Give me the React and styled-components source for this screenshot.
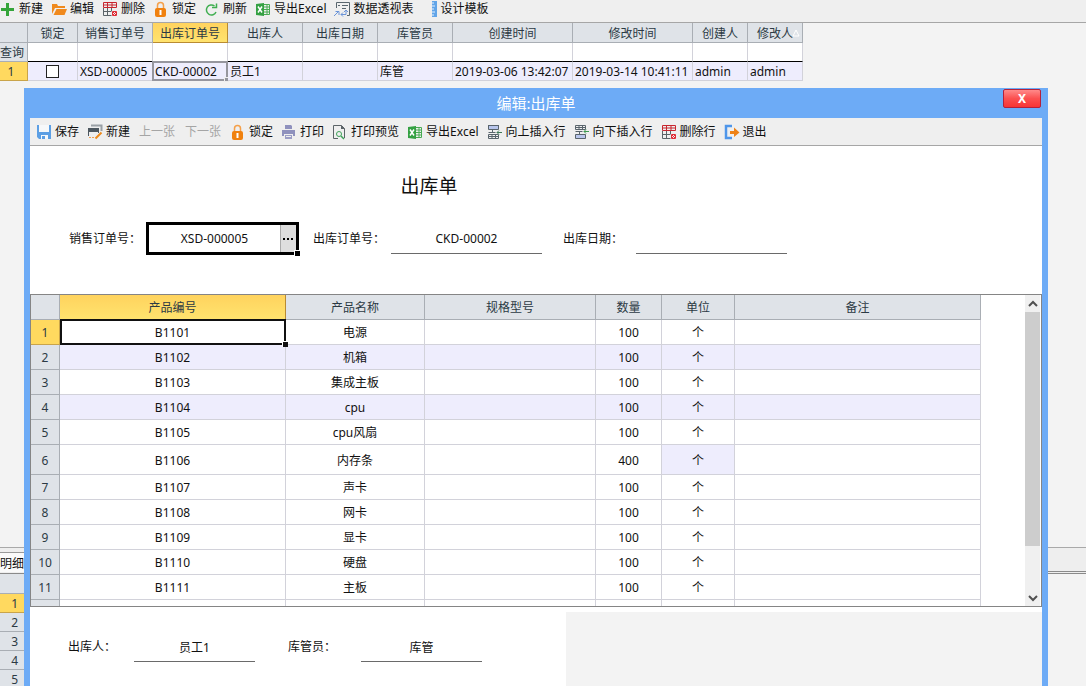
import React from "react";
import styled, { createGlobalStyle, css } from "styled-components";

const GlobalStyle = createGlobalStyle`
  *, *::before, *::after { box-sizing: border-box; }
  body {
    margin: 0;
    background: #f3f3f3;
    color: #111;
    font: 12px/16px "Noto Sans", "Noto Sans CJK SC", sans-serif;
  }
  button, input { font: inherit; color: inherit; }
`;

const HEAD = "#dfe3e8";
const LINE = "#a9aeb4";
const STRIPE = "#eeedfd";
const GOLD = "linear-gradient(#ffd35e, #ffe36e)";

/* ---------- icons ---------- */

const Icon = styled.svg.attrs({ viewBox: "0 0 16 16", "aria-hidden": true })`
  width: 16px;
  height: 16px;
  flex: none;
`;

const PlusIcon = () => (
  <Icon><path d="M6 2h3v5h5v3H9v5H6v-5H1V7h5z" fill="#35a53a" /></Icon>
);
const FolderIcon = () => (
  <Icon>
    <path d="M1 13V3h5l1 2h7v2H4z" fill="#f08a1d" />
    <path d="M5.500 8H16l-2.500 6H2.500z" fill="#f08a1d" />
  </Icon>
);
const DeleteRowIcon = () => (
  <Icon fill="none">
    <path d="M1.500 7v7.500h8M1.500 10.500h8M5.500 7v7.500M9.500 7v3" stroke="#5b6468" />
    <path d="M1.500 1.500h13v5h-13zM1.500 4h13M5.500 1.500v5M10 1.500v5" stroke="#c8262f" />
    <path d="M10.500 10.500h4v4h-4zM11 11l3 3M14 11l-3 3" stroke="#e02b35" />
  </Icon>
);
const LockIcon = () => (
  <Icon>
    <path d="M4.500 8V4.500a3 3 0 0 1 6 0V8" fill="none" stroke="#f5a04a" strokeWidth="1.500" />
    <rect x="2" y="7" width="11" height="9" rx="2" fill="#f0810f" />
    <path d="M6.500 9h2v5h-2z" fill="#fff" />
  </Icon>
);
const RefreshIcon = () => (
  <Icon fill="none" stroke="#3fae50" strokeWidth="1.500">
    <path d="M12 11A5 5 0 1 1 10.500 5" />
    <path d="M8 6.500h4.500V2.500" />
  </Icon>
);
const ExcelIcon = () => (
  <Icon>
    <path d="M1 3l8-1v13l-8-1z" fill="#35a143" />
    <path d="M3 5.500l4 6M7 5.500l-4 6" stroke="#fff" strokeWidth="1.500" />
    <path d="M9 3.500h5.500v10H9M12 3.500v10M9 6h6M9 8.500h6M9 11h6" fill="none" stroke="#48ab52" />
  </Icon>
);
const PivotIcon = () => (
  <Icon fill="none">
    <path d="M2.500 7V1.500h13v13H13M4 4.500h2M8 4.500h6M8 7.500h4" stroke="#59666e" />
    <path d="M0 15l5-5M1.500 10.500h3.500v3.500M7 13.500h5V9M10 11l2-2 2 2M9 11.500l-2 2 2 2" stroke="#6b94d8" />
  </Icon>
);
const RulerIcon = () => (
  <Icon>
    <path d="M10 0h5v16h-5z" fill="#62a5e8" />
    <path d="M10 2h2M10 5h3M10 8h2M10 11h3M10 14h2" stroke="#e4f1ff" />
  </Icon>
);
const SaveIcon = () => (
  <Icon>
    <path d="M1 1h14v14H3l-2-2z" fill="#5c9fe4" />
    <path d="M3 1h10v7H3zM5 11h7v4H5z" fill="#f6f8fa" />
    <path d="M6 12h3v3H6z" fill="#5c9fe4" />
  </Icon>
);
const NewFormIcon = () => (
  <Icon fill="none">
    <path d="M4 1.500h10.500V7" stroke="#9aa0a5" strokeWidth="2" />
    <path d="M1.500 5v7M11.500 5v4" stroke="#4e5860" />
    <path d="M1 4h11v4H1z" fill="#4e5860" />
    <path d="M2 13.500h6" stroke="#f0a050" strokeDasharray="2 1" />
    <path d="M8.500 14.500l6-6" stroke="#ee8a1a" strokeWidth="2" />
  </Icon>
);
const PrintIcon = () => (
  <Icon>
    <path d="M4 1h6l1 1v3H4z" fill="#8f91bd" />
    <path d="M1 6h13v6h-2v-2H3v2H1z" fill="#8f91bd" />
    <path d="M4 11h7v4H4z" fill="#9c9ec6" />
    <path d="M4 5.500h7M5 12.500h5" stroke="#eee" />
  </Icon>
);
const PreviewIcon = () => (
  <Icon fill="none">
    <path d="M6 14.500H1.500v-13h8l3 3V14" stroke="#5c6468" />
    <path d="M9 1v4h4" fill="#5c6468" />
    <circle cx="7" cy="10" r="2.500" stroke="#3fa25a" />
    <path d="M9 12l3 3" stroke="#3fa25a" strokeWidth="1.500" />
  </Icon>
);
const InsertAboveIcon = () => (
  <Icon fill="none" stroke="#59646c">
    <path d="M1.500 1.500h10v4h-10z" fill="#b9c6ec" />
    <path d="M1 1.500h11M1.500 8.500h7M5.500 6v2M1.500 10.500h10v4h-10zM5 10.500v4M8.500 10.500v4M2 12.500h9" />
    <path d="M15 8.500h-5M12 6.500l-2 2 2 2" stroke="#3f7757" />
  </Icon>
);
const InsertBelowIcon = () => (
  <Icon fill="none" stroke="#59646c">
    <path d="M1.500 1.500h10v4h-10zM5 1.500v4M8.500 1.500v4M2 3.500h9M1.500 7.500h7M5.500 8v2" />
    <path d="M1.500 10.500h10v4h-10z" fill="#b9c6ec" />
    <path d="M15 7.500h-5M12 5.500l-2 2 2 2" stroke="#3f9a50" />
  </Icon>
);
const ExitIcon = () => (
  <Icon>
    <path d="M8 2H2v12h6" fill="none" stroke="#4f96ea" strokeWidth="2.500" />
    <path d="M6 7h4V3.500L15.500 8.500 10 13V10H6z" fill="#ee8216" />
  </Icon>
);
const ChevronIcon = ({ down }) => (
  <Icon>
    <path d={down ? "M4 6l4 4 4-4" : "M4 10l4-4 4 4"} fill="none" stroke="#505050" strokeWidth="2" />
  </Icon>
);

/* ---------- toolbars ---------- */

const Toolbar = styled.div`
  display: flex;
  align-items: center;
  gap: 8px;
  flex: none;
  background: #efefef;
  border-bottom: 1px solid #a6a6a6;
  height: ${(p) => (p.$dialog ? 28 : 23)}px;
  padding: ${(p) => (p.$dialog ? "1px 6px 0" : "0 0 4px")};
`;

const ToolButton = styled.button`
  display: flex;
  align-items: center;
  gap: 3px;
  flex: none;
  padding: 0;
  border: 0;
  background: none;
  white-space: nowrap;
  &:disabled { color: #a5a5a5; padding: 0 1px; }
`;

const Tools = ({ items }) =>
  items.map(([label, Glyph]) => (
    <ToolButton key={label} type="button" disabled={!Glyph}>
      {Glyph && <Glyph />}
      {label}
    </ToolButton>
  ));

const MAIN_TOOLS = [
  ["新建", PlusIcon], ["编辑", FolderIcon], ["删除", DeleteRowIcon], ["锁定", LockIcon],
  ["刷新", RefreshIcon], ["导出Excel", ExcelIcon], ["数据透视表", PivotIcon], ["设计模板", RulerIcon],
];
const DIALOG_TOOLS = [
  ["保存", SaveIcon], ["新建", NewFormIcon], ["上一张"], ["下一张"], ["锁定", LockIcon],
  ["打印", PrintIcon], ["打印预览", PreviewIcon], ["导出Excel", ExcelIcon],
  ["向上插入行", InsertAboveIcon], ["向下插入行", InsertBelowIcon],
  ["删除行", DeleteRowIcon], ["退出", ExitIcon],
];

/* ---------- main window ---------- */

const Page = styled.div`
  position: relative;
  display: flex;
  flex-direction: column;
  height: 100vh;
  overflow: hidden;
`;

const ListPane = styled.main`
  flex: 1;
  min-height: 0;
  overflow: hidden;
`;

const Grid = styled.table`
  table-layout: fixed;
  border-collapse: separate;
  border-spacing: 0;
  width: ${(p) => p.$width}px;
`;

const gridCell = css`
  padding: 2px 2px 0;
  border-right: 1px solid #d2d2da;
  border-bottom: 1px solid #d2d2da;
  font-weight: normal;
  white-space: nowrap;
`;

const HeadCell = styled.th`
  ${gridCell}
  height: 20px;
  color: #2c3a44;
  text-align: center;
  background: ${(p) => (p.$active ? GOLD : HEAD)};
  border-color: ${(p) => (p.$active ? "#b98b32" : LINE)};
`;

const RowHead = styled.th`
  ${gridCell}
  height: ${(p) => p.$h || 19}px;
  padding: 2px ${(p) => p.$pad || 0}px 0 0;
  color: #2c3a44;
  text-align: ${(p) => p.$align || "center"};
  background: ${(p) => (p.$active ? "#ffd95f" : HEAD)};
  border-color: ${(p) => (p.$active ? "#c9a44a" : LINE)};
`;

const ListCell = styled.td`
  ${gridCell}
  position: relative;
  overflow: ${(p) => (p.$active ? "visible" : "hidden")};
  background: ${(p) => (p.$query ? "#fff" : STRIPE)};
  ${(p) => p.$query && "border-bottom-color: #000;"}
  ${(p) => p.$active && css`
    &::before {
      content: "";
      position: absolute;
      inset: -1px;
      border: 2px solid #96969e;
    }
    &::after {
      content: "";
      position: absolute;
      right: -2px;
      bottom: -2px;
      width: 5px;
      height: 5px;
      background: #96969e;
      border: 1px solid #eee;
    }
  `}
`;

const CheckCell = styled(ListCell)`
  padding: 0 2px;
`;

const CheckBox = styled.input.attrs({ type: "checkbox" })`
  appearance: none;
  display: block;
  width: 13px;
  height: 13px;
  margin: 0 auto;
  border: 1px solid #222;
  background: #fff;
`;

const SortMark = styled.svg.attrs({ viewBox: "0 0 8 8", "aria-hidden": true })`
  position: absolute;
  right: 2px;
  top: 6px;
  width: 8px;
  height: 8px;
`;

const SortHead = styled(HeadCell)`
  position: relative;
`;

const LIST_COLUMNS = [
  ["锁定", 50], ["销售订单号", 75], ["出库订单号", 75], ["出库人", 75], ["出库日期", 75],
  ["库管员", 75], ["创建时间", 120], ["修改时间", 120], ["创建人", 55], ["修改人", 55],
];
const LIST_ROW = [
  "XSD-000005", "CKD-00002", "员工1", "", "库管",
  "2019-03-06 13:42:07", "2019-03-14 10:41:11", "admin", "admin",
];

const DetailPane = styled.section`
  flex: 0 0 139px;
  overflow: hidden;
`;

const TabStrip = styled.div`
  height: 27px;
  padding-top: 4px;
  background: #eee;
  border-top: 1px solid #a9a9a9;
  border-bottom: 3px double #8a8a8a;
`;

const Tab = styled.button`
  display: block;
  width: 60px;
  height: 20px;
  padding: 2px 0 0;
  border: 0;
  border-top: 1px solid #999;
  background: #fafafa;
  text-align: left;
`;

/* ---------- dialog ---------- */

const Dialog = styled.section`
  position: absolute;
  inset: 88px 38px 0 24px;
  display: flex;
  flex-direction: column;
  padding: 0 6px;
  background: #6dabf6;
`;

const TitleBar = styled.header`
  display: grid;
  grid-template-columns: 1fr auto 1fr;
  align-items: center;
  flex: none;
  height: 30px;
`;

const Title = styled.h1`
  grid-column: 2;
  margin: 0;
  font-size: 15px;
  line-height: 20px;
  font-weight: normal;
  color: #fff;
`;

const CloseButton = styled.button`
  justify-self: end;
  align-self: start;
  width: 38px;
  height: 19px;
  margin: 1px 1px 0 0;
  padding: 0;
  border: 1px solid #b3203c;
  border-radius: 2px;
  background: linear-gradient(#ff8a8a, #fb5050 50%, #f83434);
  color: #fff;
  font-weight: bold;
  line-height: 16px;
`;

const Sheet = styled.div`
  flex: none;
  height: 148px;
  padding: 28px 39px 0;
  background: #fff;
`;

const SheetTitle = styled.h2`
  width: 720px;
  margin: 0;
  text-align: center;
  font-size: 19px;
  line-height: 24px;
  font-weight: normal;
`;

const FieldRow = styled.div`
  display: grid;
  grid-template-columns: ${(p) => p.$columns};
  align-items: center;
  margin-top: ${(p) => p.$top}px;
`;

const Label = styled.label`
  padding-left: ${(p) => p.$indent || 0}px;
  white-space: nowrap;
`;

const Field = styled.input`
  width: 100%;
  height: 30px;
  padding: 0;
  border: 0;
  border-bottom: 1px solid #6a6a6a;
  border-radius: 0;
  background: #fff;
  text-align: center;
  outline: none;
`;

const Lookup = styled.div`
  position: relative;
  display: flex;
  height: 33px;
  border: 3px solid #000;
  &::after {
    content: "";
    position: absolute;
    right: -4px;
    bottom: -4px;
    width: 6px;
    height: 6px;
    background: #000;
    border: solid #fff;
    border-width: 1px 0 0 1px;
  }
`;

const LookupField = styled(Field)`
  flex: 1;
  min-width: 0;
  height: auto;
  border: 0;
`;

const LookupButton = styled.button`
  flex: none;
  width: 16px;
  padding: 0;
  border: 0;
  border-left: 1px solid #aaa;
  background: #dedede;
  line-height: 0;
`;

const ItemsPane = styled.div`
  display: flex;
  justify-content: space-between;
  flex: 1;
  min-height: 0;
  overflow: hidden;
  padding-right: 1px;
  background: #fff;
  border: 1px solid #858585;
`;

const ItemHead = styled(HeadCell)`
  height: 25px;
`;

const ItemCell = styled.td`
  ${gridCell}
  position: relative;
  text-align: center;
  background: ${(p) => (p.$stripe ? STRIPE : "#fff")};
  ${(p) => p.$active && css`
    &::before {
      content: "";
      position: absolute;
      inset: -1px -1px -1px 0;
      border: 2px solid #111;
    }
    &::after {
      content: "";
      position: absolute;
      z-index: 1;
      right: -3px;
      bottom: -3px;
      width: 6px;
      height: 6px;
      background: #111;
      border: solid #fff;
      border-width: 1px 0 0 1px;
    }
  `}
`;

const ScrollBar = styled.div`
  display: flex;
  flex-direction: column;
  flex: none;
  width: 15px;
  background: #f0f0f0;
`;

const ScrollButton = styled.button`
  display: flex;
  align-items: center;
  justify-content: center;
  height: 17px;
  padding: 0;
  border: 0;
  background: none;
`;

const ScrollThumb = styled.div`
  flex: 234;
  background: #cdcdcd;
`;

const ScrollRest = styled.div`
  flex: 43;
`;

const Footer = styled.footer`
  display: grid;
  grid-template-columns: 536px 1fr;
  flex: none;
  height: 79px;
  padding-top: 5px;
  background: #fff;
`;

const FooterForm = styled.div`
  padding-left: 38px;
`;

const FooterBlank = styled.div`
  background: #f3f3f3;
`;

const ITEM_COLUMNS = [
  ["产品编号", 226], ["产品名称", 139], ["规格型号", 171], ["数量", 66], ["单位", 73], ["备注", 246],
];
const ITEMS = [
  ["B1101", "电源", 100], ["B1102", "机箱", 100], ["B1103", "集成主板", 100], ["B1104", "cpu", 100],
  ["B1105", "cpu风扇", 100], ["B1106", "内存条", 400], ["B1107", "声卡", 100], ["B1108", "网卡", 100],
  ["B1109", "显卡", 100], ["B1110", "硬盘", 100], ["B1111", "主板", 100],
];

function OrderList() {
  return (
    <Grid $width={803}>
      <colgroup>
        <col width="28" />
        {LIST_COLUMNS.map(([name, w]) => <col key={name} width={w} />)}
      </colgroup>
      <thead>
        <tr>
          <HeadCell />
          {LIST_COLUMNS.map(([name], i) =>
            i === 9 ? (
              <SortHead key={name}>
                {name}
                <SortMark><path d="M1 7l3-6 3 6z" fill="none" stroke="#fff" /></SortMark>
              </SortHead>
            ) : (
              <HeadCell key={name} $active={i === 2}>{name}</HeadCell>
            )
          )}
        </tr>
      </thead>
      <tbody>
        <tr>
          <RowHead $align="right" $pad={5}>查询</RowHead>
          {LIST_COLUMNS.map(([name]) => <ListCell key={name} $query />)}
        </tr>
        <tr>
          <RowHead $active $pad={5}>1</RowHead>
          <CheckCell><CheckBox aria-label="锁定" /></CheckCell>
          {LIST_ROW.map((text, i) => (
            <ListCell key={i} $active={i === 1}>{text}</ListCell>
          ))}
        </tr>
      </tbody>
    </Grid>
  );
}

function ItemTable() {
  return (
    <Grid $width={950}>
      <colgroup>
        <col width="29" />
        {ITEM_COLUMNS.map(([name, w]) => <col key={name} width={w} />)}
      </colgroup>
      <thead>
        <tr>
          <ItemHead />
          {ITEM_COLUMNS.map(([name], i) => <ItemHead key={name} $active={i === 0}>{name}</ItemHead>)}
        </tr>
      </thead>
      <tbody>
        {ITEMS.map(([code, name, count], i) => {
          const stripe = i === 1 || i === 3;
          return (
            <tr key={code}>
              <RowHead $h={i === 5 ? 30 : 25} $active={i === 0}>{i + 1}</RowHead>
              <ItemCell $stripe={stripe} $active={i === 0}>{code}</ItemCell>
              <ItemCell $stripe={stripe}>{name}</ItemCell>
              <ItemCell $stripe={stripe} />
              <ItemCell $stripe={stripe}>{count}</ItemCell>
              <ItemCell $stripe={stripe || i === 5}>个</ItemCell>
              <ItemCell $stripe={stripe} />
            </tr>
          );
        })}
        <tr>
          <RowHead $h={25} />
          {ITEM_COLUMNS.map(([name]) => <ItemCell key={name} />)}
        </tr>
      </tbody>
    </Grid>
  );
}

export default function App() {
  return (
    <>
      <GlobalStyle />
      <Page>
        <Toolbar><Tools items={MAIN_TOOLS} /></Toolbar>
        <ListPane><OrderList /></ListPane>
        <DetailPane>
          <TabStrip><Tab type="button">明细</Tab></TabStrip>
          <Grid $width={60}>
            <thead><tr><HeadCell /></tr></thead>
            <tbody>
              {[1, 2, 3, 4, 5].map((n) => (
                <tr key={n}><RowHead $align="right" $pad={41} $active={n === 1}>{n}</RowHead></tr>
              ))}
            </tbody>
          </Grid>
        </DetailPane>

        <Dialog role="dialog" aria-labelledby="dialog-title">
          <TitleBar>
            <Title id="dialog-title">编辑:出库单</Title>
            <CloseButton type="button">X</CloseButton>
          </TitleBar>
          <Toolbar $dialog><Tools items={DIALOG_TOOLS} /></Toolbar>
          <Sheet>
            <SheetTitle>出库单</SheetTitle>
            <FieldRow $top={24} $columns="77px 153px 92px 151px 94px 151px">
              <Label htmlFor="sales-no">销售订单号：</Label>
              <Lookup>
                <LookupField id="sales-no" defaultValue="XSD-000005" />
                <LookupButton type="button" aria-label="选择">
                  <Icon><path d="M2 7h2v2H2zM6 7h2v2H6zM10 7h2v2h-2z" /></Icon>
                </LookupButton>
              </Lookup>
              <Label htmlFor="out-no" $indent={14}>出库订单号：</Label>
              <Field id="out-no" defaultValue="CKD-00002" />
              <Label htmlFor="out-date" $indent={21}>出库日期：</Label>
              <Field id="out-date" />
            </FieldRow>
          </Sheet>
          <ItemsPane>
            <ItemTable />
            <ScrollBar>
              <ScrollButton type="button" aria-label="向上滚动"><ChevronIcon /></ScrollButton>
              <ScrollThumb />
              <ScrollRest />
              <ScrollButton type="button" aria-label="向下滚动"><ChevronIcon down /></ScrollButton>
            </ScrollBar>
          </ItemsPane>
          <Footer>
            <FooterForm>
              <FieldRow $top={20} $columns="66px 121px 106px 121px">
                <Label htmlFor="sender">出库人：</Label>
                <Field id="sender" defaultValue="员工1" />
                <Label htmlFor="keeper" $indent={33}>库管员：</Label>
                <Field id="keeper" defaultValue="库管" />
              </FieldRow>
            </FooterForm>
            <FooterBlank />
          </Footer>
        </Dialog>
      </Page>
    </>
  );
}
